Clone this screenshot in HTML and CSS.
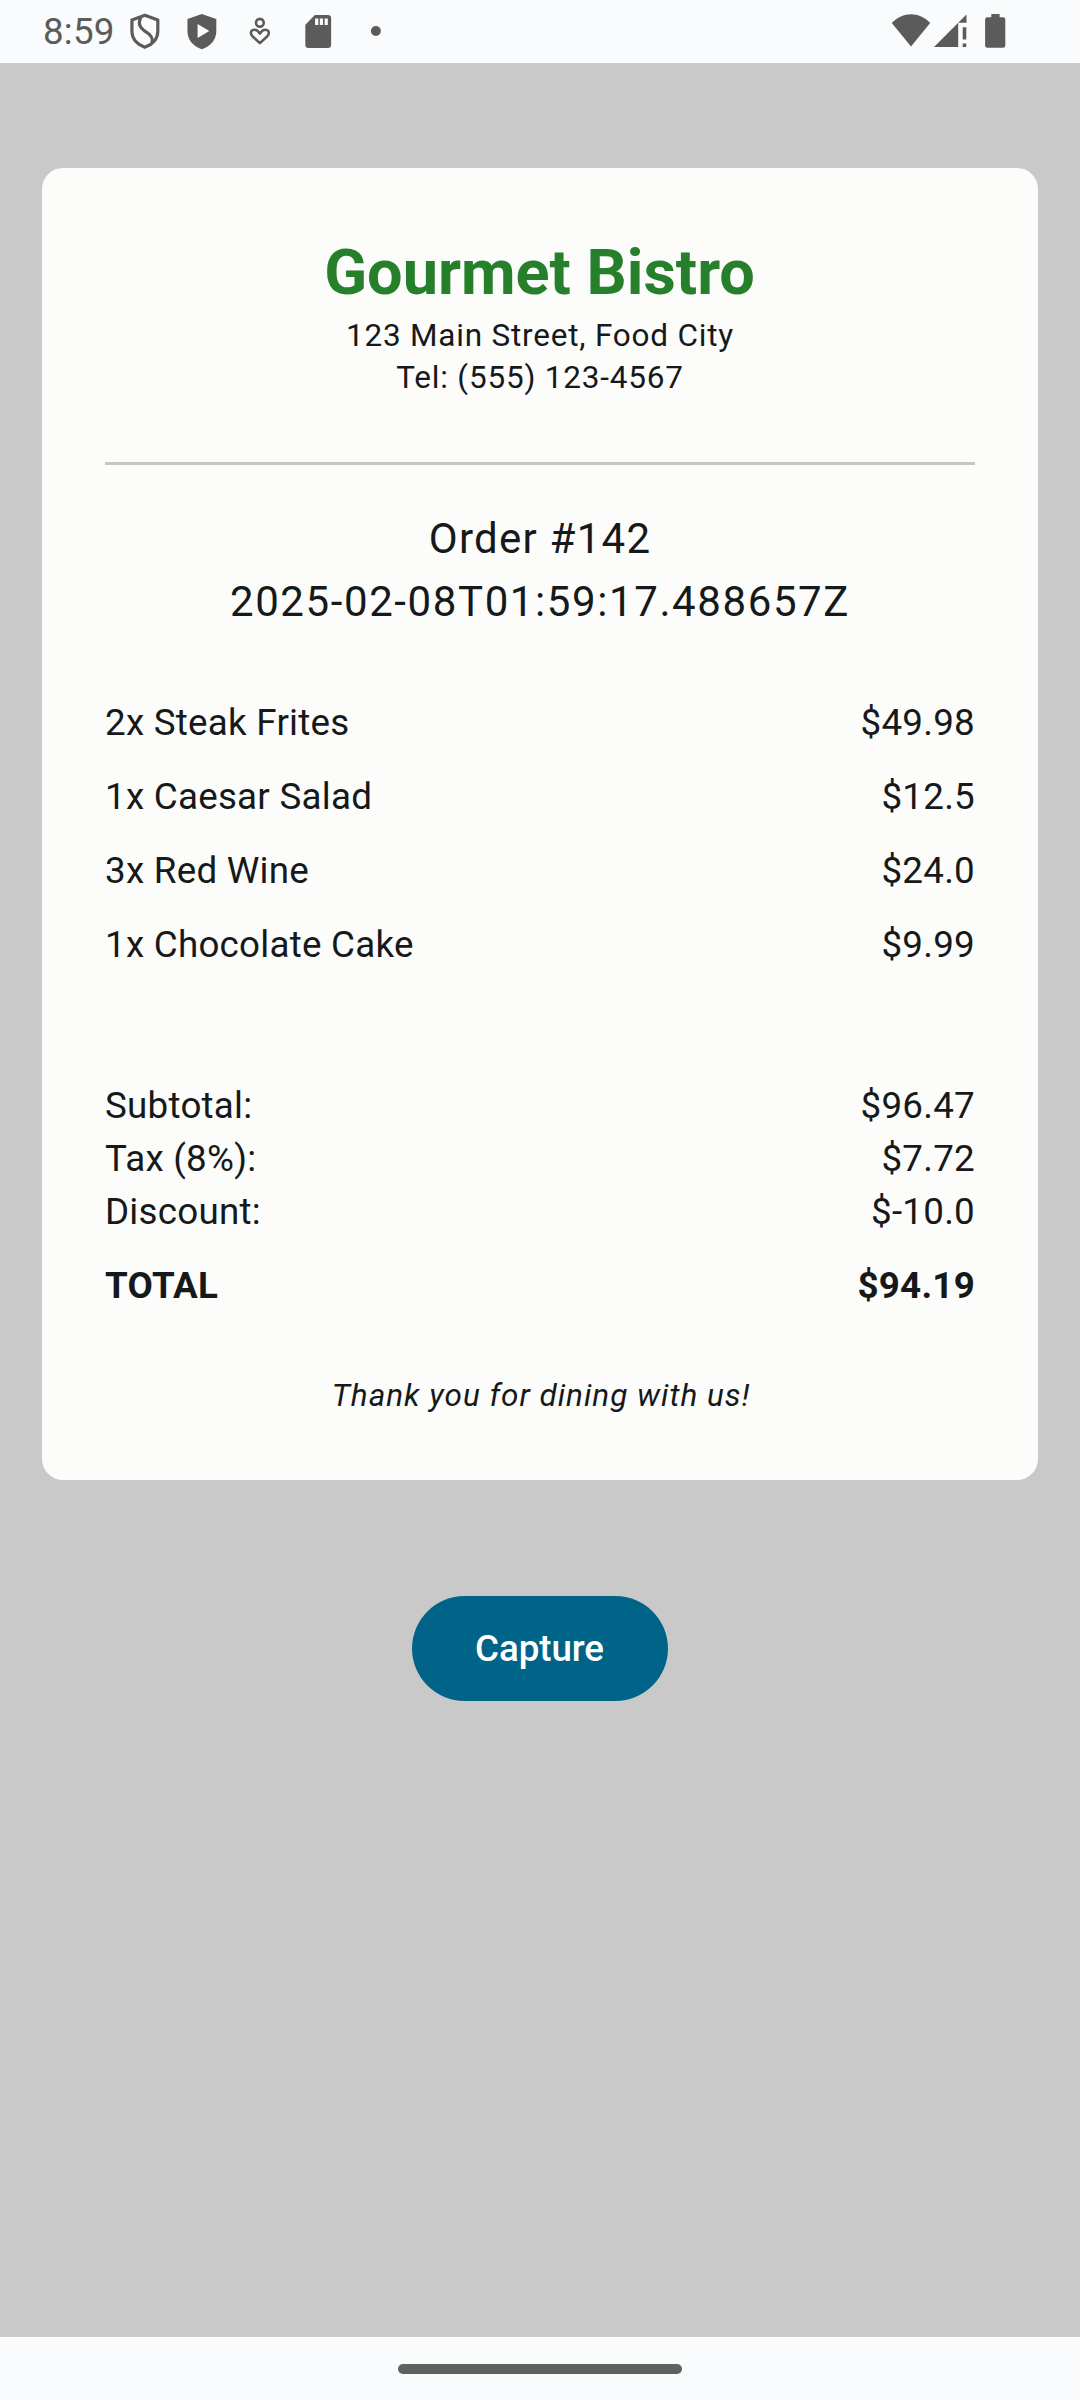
FILE: index.html
```html
<!DOCTYPE html>
<html lang="en">
<head>
<meta charset="utf-8">
<title>Receipt</title>
<link rel="stylesheet" href="styles.css">
</head>
<body>
<div class="screen">
  <header class="status-bar">
    <div class="status-left">
      <span class="clock">8:59</span>
      <div class="notifications">
        <svg class="notification" viewBox="0 0 58 63" fill="none" stroke="currentColor" stroke-width="3.2" stroke-linejoin="round">
          <path d="M29 15.3 42 20V31.5C42 38.8 36.6 44.6 29 47.4 21.4 44.6 16 38.8 16 31.5V20Z"/>
          <path d="M24.8 17C22 24 23.6 27.5 29 31.2 36 35.3 37.5 38.5 36 43"/>
        </svg>
        <svg class="notification" viewBox="0 0 58 63">
          <path fill="currentColor" fill-rule="evenodd" d="M29 13.8 43.5 19V31C43.5 39.8 37.6 46.6 29 49.4 20.4 46.6 14.5 39.8 14.5 31V19ZM24.7 24V38L36.5 31Z"/>
        </svg>
        <svg class="notification" viewBox="0 0 58 63" fill="none" stroke="currentColor" stroke-width="2.6">
          <circle cx="29" cy="22.7" r="3.9"/>
          <path stroke-linejoin="round" d="M29 43.2 21.5 36.2C18.5 33 20.4 29.8 23.6 29.8 26.1 29.8 27.5 31.4 29 33.6 30.5 31.4 31.9 29.8 34.4 29.8 37.6 29.8 39.5 33 36.5 36.2Z"/>
        </svg>
        <svg class="notification" viewBox="0 0 58 63">
          <path fill="currentColor" fill-rule="evenodd" d="M26 15H39Q42.3 15 42.3 18.3V44.7Q42.3 48 39 48H19.7Q16.4 48 16.4 44.7V24.7ZM26.2 18.5V25H29.5V18.5ZM31 18.5V25H34.2V18.5ZM35.8 18.5V25H39V18.5Z"/>
        </svg>
        <svg class="notification" viewBox="0 0 58 63"><circle cx="29" cy="31" r="5" fill="currentColor"/></svg>
      </div>
    </div>
    <div class="status-right">
      <svg class="wifi" viewBox="0 0 40 63" fill="currentColor"><path d="M20 46.5.8 23C11.5 11.3 28.5 11.3 39.2 23Z"/></svg>
      <svg class="signal" viewBox="0 0 33 63" fill="currentColor"><path d="M0 47 24.2 22.8V47ZM24.2 22.8 32.5 14.5V22.8ZM28.7 27.3H32.3V39.6H28.7ZM28.7 43.5H32.3V47H28.7Z"/></svg>
      <svg class="battery" viewBox="0 0 21 63" fill="currentColor"><path d="M6.3 14H14.6V17.3H18Q20.3 17.3 20.3 19.6V45.4Q20.3 47.7 18 47.7H2.4Q.1 47.7.1 45.4V19.6Q.1 17.3 2.4 17.3H6.3Z"/></svg>
    </div>
  </header>

  <main class="content">
    <section class="receipt">
      <div class="restaurant">
        <h1 class="restaurant-name">Gourmet Bistro</h1>
        <p class="small">123 Main Street, Food City</p>
        <p class="small">Tel: (555) 123-4567</p>
      </div>
      <hr class="divider">
      <div class="order">
        <p>Order #142</p>
        <p class="timestamp">2025-02-08T01:59:17.488657Z</p>
      </div>
      <div class="items">
        <div class="row"><span>2x Steak Frites</span><span>$49.98</span></div>
        <div class="row"><span>1x Caesar Salad</span><span>$12.5</span></div>
        <div class="row"><span>3x Red Wine</span><span>$24.0</span></div>
        <div class="row"><span>1x Chocolate Cake</span><span>$9.99</span></div>
      </div>
      <div class="totals">
        <div class="row"><span>Subtotal:</span><span>$96.47</span></div>
        <div class="row"><span>Tax (8%):</span><span>$7.72</span></div>
        <div class="row"><span>Discount:</span><span>$-10.0</span></div>
        <div class="row total"><span>TOTAL</span><span>$94.19</span></div>
      </div>
      <p class="small thanks">Thank you for dining with us!</p>
    </section>
    <button class="capture" type="button">Capture</button>
  </main>

  <footer class="nav-bar"><div class="handle"></div></footer>
</div>
</body>
</html>
```
FILE: styles.css
```css
* {
  box-sizing: border-box;
}

body,
h1,
p {
  margin: 0;
}

body {
  font-family: Roboto, sans-serif;
  color: #16191a;
}

.screen {
  display: flex;
  flex-direction: column;
  width: 1080px;
  height: 2400px;
  background: #c9c9c9;
}

.status-bar {
  display: flex;
  justify-content: space-between;
  height: 63px;
  padding: 0 74px 0 43px;
  background: #f9fbfd;
  color: #5b5c5a;
}

.status-left,
.status-right,
.notifications {
  display: flex;
}

.clock {
  width: 72.6px;
  font-size: 36.75px;
  letter-spacing: 0.2px;
  line-height: 63px;
  white-space: nowrap;
}

.notification {
  width: 57.75px;
  height: 63px;
}

.wifi {
  width: 40px;
  height: 63px;
  margin-right: 3px;
}

.signal {
  width: 33px;
  height: 63px;
  margin-right: 18.5px;
}

.battery {
  width: 21px;
  height: 63px;
}

.content {
  display: flex;
  flex: 1;
  flex-direction: column;
  align-items: center;
  padding: 105px 42px 0;
}

.receipt {
  width: 100%;
  height: 1312px;
  padding: 63px;
  border-radius: 21px;
  background: #fcfcfb;
}

.restaurant,
.order,
.thanks {
  text-align: center;
}

.restaurant-name {
  padding-right: 1px;
  color: #26802b;
  font-size: 63px;
  font-weight: 700;
  line-height: 84px;
}

.small {
  font-size: 31.5px;
  letter-spacing: 0.79px;
  line-height: 42px;
}

.divider {
  height: 3px;
  margin: 63px 0 42px;
  border: 0;
  background: #c7c7bf;
}

.order {
  font-size: 42px;
  letter-spacing: 1.25px;
  line-height: 63px;
}

.timestamp {
  letter-spacing: 1.6px;
}

.items {
  display: flex;
  flex-direction: column;
  gap: 21px;
  margin-top: 63px;
}

.row {
  display: flex;
  justify-content: space-between;
  font-size: 36.75px;
  letter-spacing: 0.25px;
  line-height: 53px;
}

.totals {
  margin-top: 108px;
}

.total {
  margin-top: 21px;
  font-weight: 700;
}

.thanks {
  margin-top: 63px;
  padding-left: 2px;
  font-style: italic;
  letter-spacing: 0.98px;
}

.capture {
  width: 256px;
  height: 105px;
  margin-top: 116px;
  padding: 2px 1px 0 0;
  border: 0;
  border-radius: 52.5px;
  background: #006388;
  color: #fff;
  font: 500 36.75px/52.5px Roboto, sans-serif;
  letter-spacing: -0.1px;
}

.nav-bar {
  display: flex;
  justify-content: center;
  height: 63px;
  padding-top: 27px;
  background: #f9fbfd;
}

.handle {
  width: 284px;
  height: 10px;
  border-radius: 5px;
  background: #60625f;
}
```
